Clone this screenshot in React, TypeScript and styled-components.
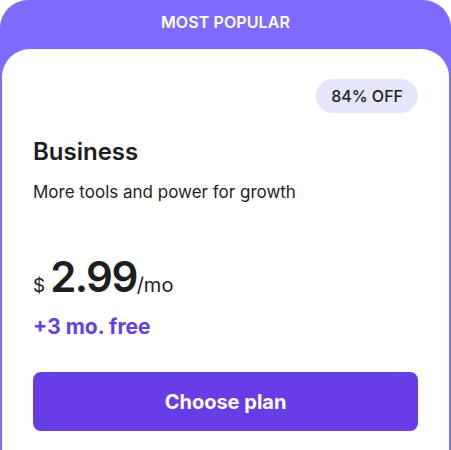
import React from "react";
import styled, { createGlobalStyle } from "styled-components";

const Global = createGlobalStyle`
  html, body { margin: 0; padding: 0; background: #ffffff; }
  body { font-family: Inter, "DejaVu Sans", sans-serif; color: #1d1e20; }
  * { box-sizing: border-box; }
`;

const Card = styled.div`
  width: 451px;
  background: #7e6bff;
  border-radius: 28px 28px 0 0;
  padding: 0 2px;
  display: flex;
  flex-direction: column;
`;

const Ribbon = styled.div`
  height: 49px;
  display: flex;
  align-items: center;
  justify-content: center;
  color: #ffffff;
  font-size: 16px;
  font-weight: 600;
  letter-spacing: 0.1px;
  padding-bottom: 5px;
`;

const Body = styled.div`
  background: #ffffff;
  border-radius: 28px 28px 0 0;
  padding: 30px 31px 40px;
  display: flex;
  flex-direction: column;
`;

const BadgeRow = styled.div`
  display: flex;
  justify-content: flex-end;
`;

const Badge = styled.span`
  height: 34px;
  padding: 0 15px;
  border-radius: 17px;
  background: #e5e5fc;
  color: #1d1e20;
  font-size: 16px;
  font-weight: 500;
  display: inline-flex;
  align-items: center;
`;

const Title = styled.h2`
  margin: 23px 0 0;
  font-size: 24px;
  font-weight: 600;
  line-height: 32px;
`;

const Desc = styled.p`
  margin: 12px 0 0;
  font-size: 17px;
  line-height: 24px;
`;

const PriceRow = styled.div`
  margin-top: 52px;
  display: flex;
  align-items: baseline;
  line-height: 1;
`;

const Currency = styled.span`
  font-size: 19px;
  margin-right: 5px;
`;

const Amount = styled.span`
  font-size: 42px;
  font-weight: 600;
  letter-spacing: -1.6px;
  margin-right: 0;
`;

const Period = styled.span`
  font-size: 20px;
`;

const Bonus = styled.div`
  margin-top: 15px;
  color: #673de6;
  font-size: 21px;
  font-weight: 700;
  line-height: 28px;
`;

const Button = styled.button`
  margin-top: 31px;
  height: 59px;
  width: 100%;
  border: none;
  border-radius: 8px;
  background: #673de6;
  color: #ffffff;
  font-family: inherit;
  font-size: 20px;
  font-weight: 700;
  cursor: pointer;
`;

export default function App() {
  return (
    <>
      <Global />
      <Card>
        <Ribbon>MOST POPULAR</Ribbon>
        <Body>
          <BadgeRow>
            <Badge>84% OFF</Badge>
          </BadgeRow>
          <Title>Business</Title>
          <Desc>More tools and power for growth</Desc>
          <PriceRow>
            <Currency>$</Currency>
            <Amount>2.99</Amount>
            <Period>/mo</Period>
          </PriceRow>
          <Bonus>+3 mo. free</Bonus>
          <Button>Choose plan</Button>
        </Body>
      </Card>
    </>
  );
}
